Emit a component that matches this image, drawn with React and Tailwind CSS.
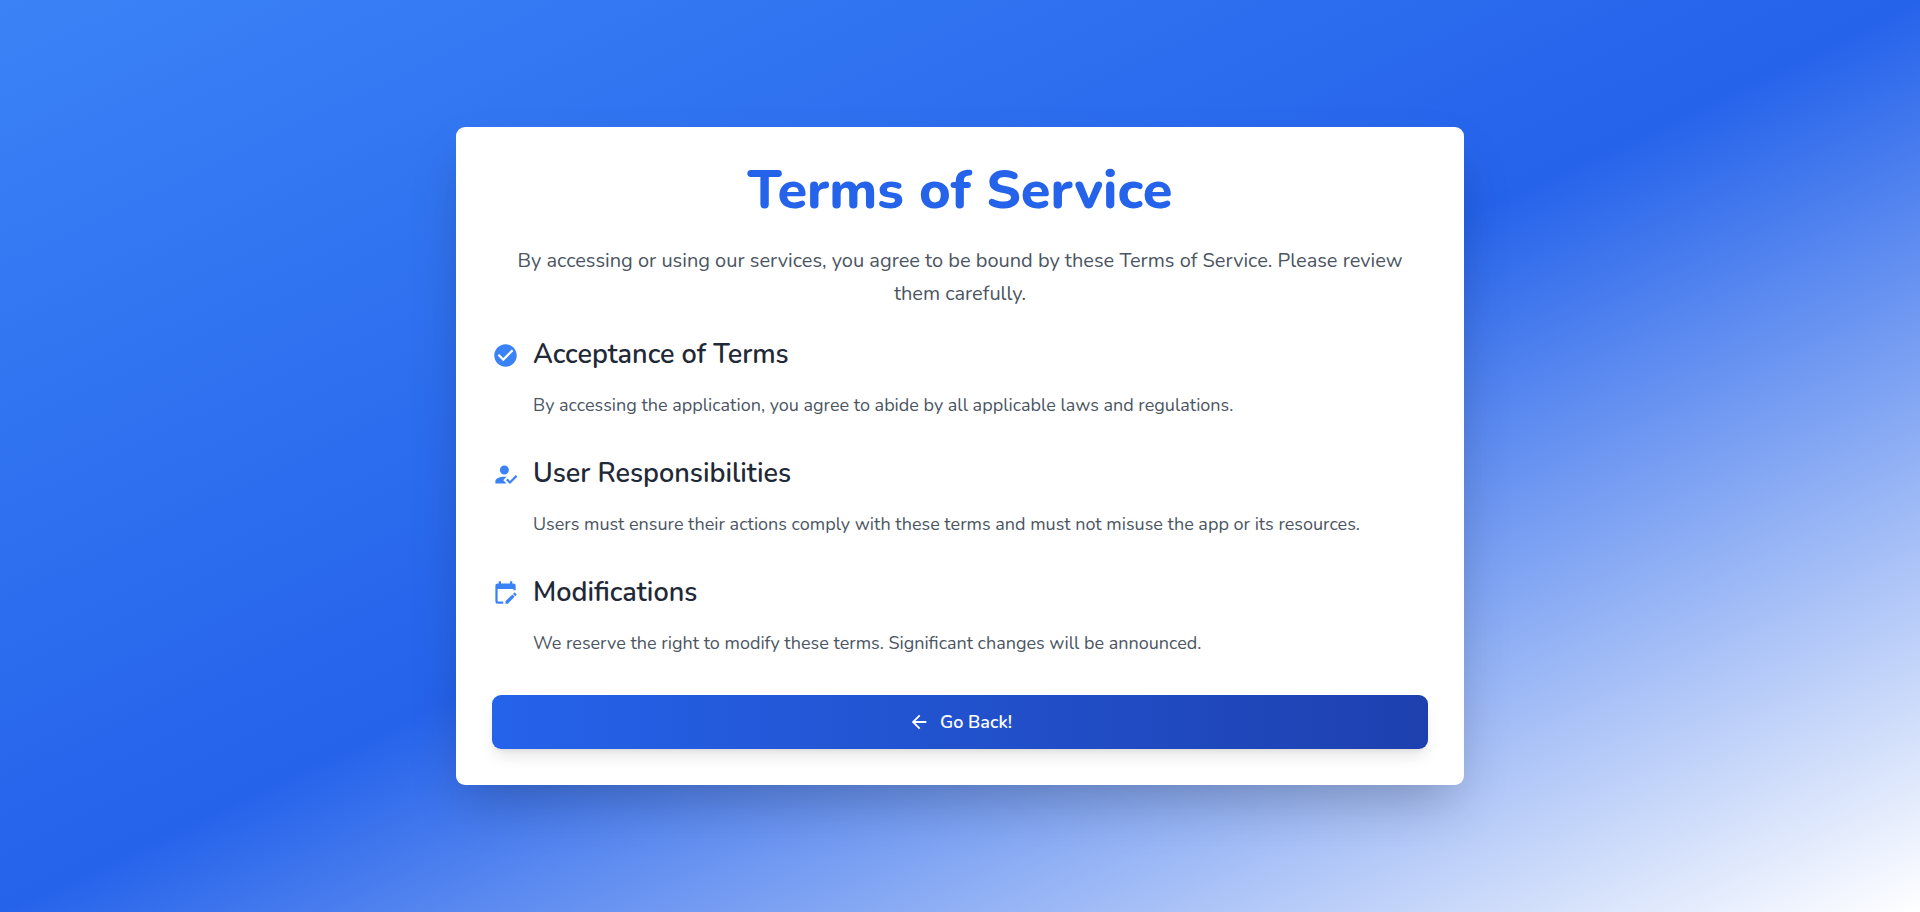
const icons = {
  checkCircle:
    "M12 2C6.5 2 2 6.5 2 12S6.5 22 12 22 22 17.5 22 12 17.5 2 12 2M10 17L5 12L6.41 10.59L10 14.17L17.59 6.58L19 8L10 17Z",
  accountCheck:
    "M21.1,12.5L22.5,13.91L15.97,20.5L12.5,17L13.9,15.59L15.97,17.67L21.1,12.5M10,17L13,20H3V18C3,15.79 6.58,14 11,14L12.89,14.11L10,17M11,4A4,4 0 0,1 15,8A4,4 0 0,1 11,12A4,4 0 0,1 7,8A4,4 0 0,1 11,4Z",
  calendarEdit:
    "M19,3H18V1H16V3H8V1H6V3H5A2,2 0 0,0 3,5V19A2,2 0 0,0 5,21H10V19H5V8H19V9H21V5A2,2 0 0,0 19,3M21.7,13.35L20.7,14.35L18.65,12.35L19.65,11.35C19.85,11.14 20.19,11.13 20.42,11.35L21.7,12.63C21.89,12.83 21.89,13.15 21.7,13.35M12,18.94L18.07,12.88L20.12,14.88L14.06,21H12V18.94Z",
  arrowLeft: "M20,11V13H8L13.5,18.5L12.08,19.92L4.16,12L12.08,4.08L13.5,5.5L8,11H20Z",
};

const sections = [
  {
    icon: "checkCircle",
    title: "Acceptance of Terms",
    text: "By accessing the application, you agree to abide by all applicable laws and regulations.",
  },
  {
    icon: "accountCheck",
    title: "User Responsibilities",
    text: "Users must ensure their actions comply with these terms and must not misuse the app or its resources.",
  },
  {
    icon: "calendarEdit",
    title: "Modifications",
    text: "We reserve the right to modify these terms. Significant changes will be announced.",
  },
];

function Icon({ name, className }) {
  return (
    <svg viewBox="0 0 24 24" fill="currentColor" aria-hidden="true" className={className}>
      <path d={icons[name]} />
    </svg>
  );
}

function Section({ icon, title, text }) {
  return (
    <section className="flex items-start gap-[14px]">
      <Icon name={icon} className="mt-[5px] size-[27px] shrink-0 text-[#3b82f6]" />
      <div>
        <h2 className="mb-[18px] text-[27px] leading-9 font-semibold text-[#1f2937]">{title}</h2>
        <p className="text-[18px] leading-[29px] text-[#4b5563]">{text}</p>
      </div>
    </section>
  );
}

export default function App() {
  return (
    <main className="flex min-h-screen items-center justify-center bg-linear-to-br/srgb from-[#3b82f6] via-[#2563eb] to-white font-['Nunito',sans-serif]">
      <div className="w-full max-w-[1008px] rounded-[9px] bg-white p-9 shadow-2xl">
        <h1 className="mb-[27px] text-center text-[54px] leading-[54px] font-extrabold text-[#2563eb]">
          Terms of Service
        </h1>
        <p className="mb-[27px] text-center text-[20px] leading-[33px] text-[#4b5563]">
          By accessing or using our services, you agree to be bound by these Terms of Service. Please review them
          carefully.
        </p>
        <div className="flex flex-col gap-9">
          {sections.map((section) => (
            <Section key={section.title} {...section} />
          ))}
        </div>
        <button
          type="button"
          className="mt-[37px] flex h-[54px] w-full items-center justify-center gap-[10px] rounded-[9px] bg-linear-to-r/srgb from-[#2563eb] to-[#1e40af] text-[18px] font-semibold text-white shadow-lg"
        >
          <Icon name="arrowLeft" className="size-[22px]" />
          Go Back!
        </button>
      </div>
    </main>
  );
}
